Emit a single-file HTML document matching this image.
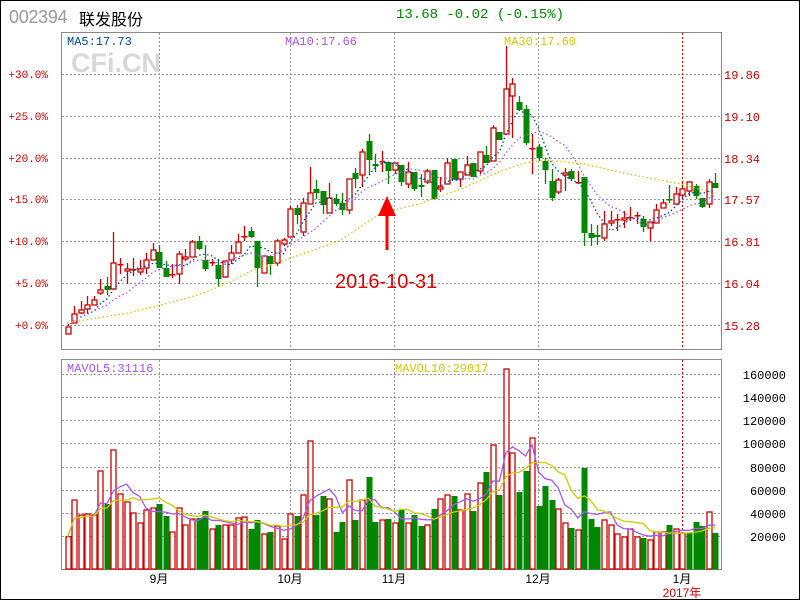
<!DOCTYPE html>
<html><head><meta charset="utf-8"><style>
body{margin:0;background:#fff;}
#w{position:relative;width:798px;height:598px;border:1px solid #000;overflow:hidden;background:#fff;font-family:"Liberation Mono","Noto Sans CJK SC",monospace;}
.t{position:absolute;white-space:nowrap;}
</style></head><body><div id="w">
<div class="t" style="left:8px;top:6px;font:18px 'Liberation Sans',sans-serif;color:#999;letter-spacing:-0.3px;">002394</div>
<div class="t" style="left:78px;top:5px;font:16px 'Noto Sans CJK SC',sans-serif;color:#000;">联发股份</div>
<div class="t" style="left:395px;top:6px;font:14px 'Liberation Mono',monospace;color:#080;">13.68 -0.02 (-0.15%)</div>
<div class="t" style="left:70px;top:47px;font:bold 27px 'Liberation Sans',sans-serif;color:#d8d8d8;">CFi.CN</div>
<svg id="s" width="798" height="598" style="position:absolute;left:0;top:0" font-family="Liberation Mono, monospace"></svg>
</div>
<script>
var C=[[333,326,323,333],[313,322,305,322],[309,312,300,313],[304,308,295,313],[299,304,295,304],[289,292,278,294],[285,289,276,294,1],[262,288,231,288],[263,264,257,273],[268,270,262,283],[268,269,257,275],[268,271,259,274],[259,267,252,273],[249,259,242,259],[251,267,244,267,1],[267,276,260,276,1],[273,274,263,277],[253,273,250,283],[256,258,248,260],[241,256,239,256],[240,248,235,249,1],[259,268,244,270,1],[261,262,258,265],[264,278,258,286,1],[260,276,260,277],[252,259,244,263],[241,252,233,252],[235,236,225,240],[230,236,226,237,1],[240,267,240,286,1],[255,272,255,272],[255,263,255,274,1],[240,262,238,265],[239,243,237,245],[208,236,205,236],[207,214,204,223,1],[202,231,197,235],[192,203,166,203],[188,192,179,198,1],[190,204,190,213,1],[197,212,182,212],[198,203,193,205,1],[202,209,192,214,1],[178,209,178,213],[172,178,167,187,1],[151,174,148,186],[140,159,133,173,1],[163,165,153,171,1],[160,161,150,171],[161,170,161,183,1],[162,169,162,173],[164,181,164,185,1],[171,183,161,187],[171,188,171,190,1],[184,186,173,196,1],[170,181,168,183],[169,198,169,198,1],[186,188,176,191],[162,183,157,183],[158,179,158,179,1],[171,178,171,186],[164,174,155,174],[162,176,162,176,1],[151,170,151,173],[154,162,145,162,1],[127,160,124,160],[131,139,131,139,1],[88,133,45,133],[83,95,77,137],[101,109,95,109,1],[108,142,104,144,1],[147,148,133,173],[146,157,143,160,1],[160,169,157,183,1],[180,197,168,200,1],[179,191,177,193],[172,174,167,190],[170,178,168,180,1],[181,182,170,183],[176,232,176,245,1],[232,237,223,245,1],[234,236,224,244,1],[223,237,210,240],[220,222,210,225],[218,219,213,230],[217,219,210,227],[216,217,206,220],[214,215,211,223],[218,226,215,231,1],[221,227,221,240],[209,222,203,222],[202,207,198,207],[198,199,184,202,1],[193,203,186,203],[188,194,180,197],[181,190,181,195],[185,195,183,198,1],[197,206,197,207,1],[181,203,178,207],[182,187,172,187,1]];
var V="535.7r 499r 514r 513r 514r 470r 503g 449r 493r 501r 512r 522r 509r 507r 503g 515g 531r 507r 524r 518r 517g 510g 528r 524g 524r 524r 517r 516r 528g 519g 533r 531g 525r 538r 513r 515g 494r 440r 514g 495g 498r 531g 521g 479r 519g 499r 476g 521g 519r 518g 522r 509g 522r 514g 525g 524r 508g 498r 494r 495g 509r 493r 510g 482r 471g 444r 494g 368r 452r 491g 470g 437r 505g 485g 499g 508r 522r 527g 529r 467g 518g 526g 519r 524r 533r 536r 528r 536r 537g 539r 531r 531r 524g 528r 532r 532g 521g 525g 511r 532g".split(" ");
var R="#d00000",G="#008800",h='';
function X(i){return 66.7+i*6.54;}
function hl(y,x1,x2,c){h+='<line x1="'+x1+'" y1="'+y+'" x2="'+x2+'" y2="'+y+'" stroke="'+(c||'#999')+'" stroke-dasharray="2,2"/>';}
function vl(x,y1,y2,c){h+='<line x1="'+x+'" y1="'+y1+'" x2="'+x+'" y2="'+y2+'" stroke="'+(c||'#999')+'" stroke-dasharray="2,2"/>';}
[73,115,157,198,240,282,324].forEach(function(y){hl(y+.5,61,720);});
[373,396,419,442,466,489,512,535].forEach(function(y){hl(y+.5,61,720);});
[158,289,393,537].forEach(function(x){vl(x+.5,32,349);vl(x+.5,359,569);});
vl(681.5,32,349,'#d00');vl(681.5,359,569,'#d00');
h+='<rect x="60.5" y="31.5" width="660" height="317" fill="none" stroke="#888"/>';
h+='<rect x="60.5" y="358.5" width="660" height="210" fill="none" stroke="#888"/>';
C.forEach(function(c,i){var x=X(i),g=c[4],col=g?G:R,t=Math.min(c[0],c[1]),b=Math.max(c[0],c[1]);if(b-t<1)b=t+1;
var xx=Math.round(x)+.5;
h+='<line x1="'+xx+'" y1="'+c[2]+'" x2="'+xx+'" y2="'+c[3]+'" stroke="'+col+'" stroke-width="1.3"/>';
if(b-t<=1.5){h+='<rect x="'+(xx-3)+'" y="'+t+'" width="6" height="1.5" fill="'+col+'"/>';}
else if(g)h+='<rect x="'+(xx-3)+'" y="'+t+'" width="6" height="'+(b-t)+'" fill="'+G+'"/>';
else h+='<rect x="'+(xx-2.5)+'" y="'+t+'" width="5" height="'+(b-t)+'" fill="#fff" stroke="'+R+'" stroke-width="1.3"/>';});
function ma(arr,n,col,dash){var p=[];for(var i=0;i<arr.length;i++){var s=0,k=0;for(var j=Math.max(0,i-n+1);j<=i;j++){s+=arr[j];k++;}p.push(X(i).toFixed(1)+','+(s/k).toFixed(1));}
h+='<polyline points="'+p.join(' ')+'" fill="none" stroke="'+col+'" stroke-width="1.3" '+(dash?'stroke-dasharray="1.5,2.5"':'')+'/>';}
var cl=C.map(function(c){return c[4]?Math.max(c[0],c[1]):Math.min(c[0],c[1]);});
ma(cl,5,'#004a9a',1);ma(cl,10,'#a855f7',1);
h+='<polyline points="66,322 127,312 160,304 200,293 227,282 250,270 290,257 338,240 380,212 418,203 460,188 500,170 524,162 543,159 583,163 627,173 680,183 713,192" fill="none" stroke="#cccc00" stroke-width="1.3" stroke-dasharray="1.5,2.5"/>';
var vt=[];V.forEach(function(v,i){var y=parseFloat(v),g=v.slice(-1)=='g',x=Math.round(X(i));vt.push(y);
if(g)h+='<rect x="'+(x-2.5)+'" y="'+y+'" width="6" height="'+(568.5-y)+'" fill="'+G+'"/>';
else h+='<rect x="'+(x-2)+'" y="'+y+'" width="5" height="'+(568-y)+'" fill="#fff" stroke="'+R+'" stroke-width="1.3"/>';});
ma(vt,5,'#a855f7');ma(vt,10,'#cccc00');
function tx(x,y,s,col,sz,anc){h+='<text x="'+x+'" y="'+y+'" fill="'+col+'" font-size="'+(sz||12)+'"'+(anc?' text-anchor="'+anc+'"':'')+'>'+s+'</text>';}
tx(66,44,'MA5:17.73','#004a9a');tx(284,44,'MA10:17.66','#a855f7');tx(503,44,'MA30:17.60','#cccc00');
tx(66,371,'MAVOL5:31116','#a855f7');tx(394,371,'MAVOL10:29017','#cccc00');
[['+30.0%',73],['+25.0%',115],['+20.0%',157],['+15.0%',198],['+10.0%',240],['+5.0%',282],['+0.0%',324]].forEach(function(a){tx(47,a[1]+4,a[0],'#d00000',11,'end');});
[['19.86',73],['19.10',115],['18.34',157],['17.57',198],['16.81',240],['16.04',282],['15.28',324]].forEach(function(a){tx(723,a[1]+5,a[0],'#d00000',12);});
[['160000',373],['140000',396],['120000',419],['100000',442],['80000',466],['60000',489],['40000',512],['20000',535]].forEach(function(a){tx(785,a[1]+5,a[0],'#000',12,'end');});
h+='<g font-family="Liberation Sans, Noto Sans CJK SC, sans-serif">';
tx(158,582,'9月','#000',12,'middle');tx(289,582,'10月','#000',12,'middle');tx(393,582,'11月','#000',12,'middle');tx(537,582,'12月','#000',12,'middle');tx(681,582,'1月','#000',12,'middle');tx(681,596,'2017年','#d00000',12,'middle');
tx(334,287,'2016-10-31','#e00000',20);
h+='</g>';
h+='<polygon points="386,195 395,215 387.5,215 387.5,249 384.5,249 384.5,215 377,215" fill="#f00"/>';
document.getElementById('s').innerHTML=h;
</script></body></html>
